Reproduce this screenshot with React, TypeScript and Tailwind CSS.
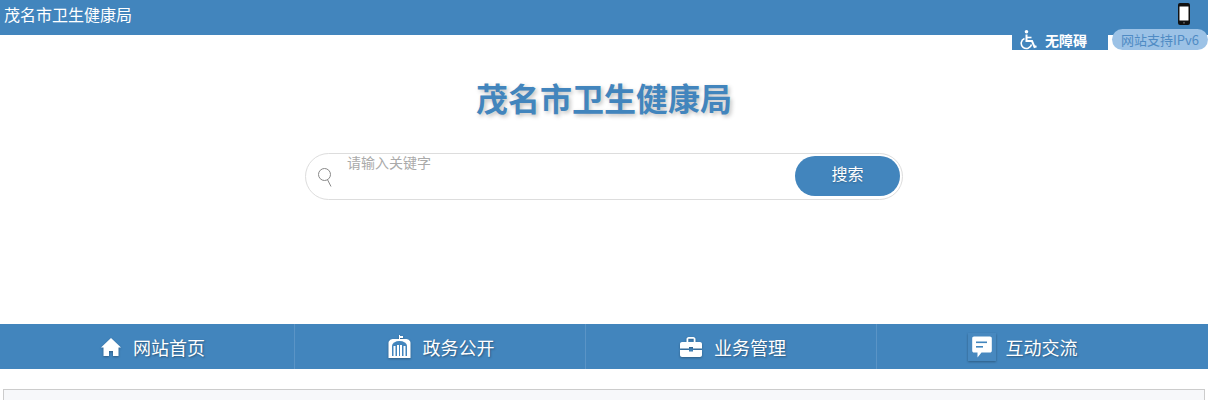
const cjk = "font-['Noto_Sans_CJK_SC','Noto_Sans',sans-serif]";

function PhoneIcon() {
  return (
    <svg width="12" height="22" viewBox="0 0 12 22">
      <rect x="0" y="0" width="12" height="22" rx="2" fill="#111" />
      <rect x="1.5" y="3.5" width="9" height="14" fill="#fff" />
      <circle cx="6" cy="19.8" r="1" fill="#555" />
    </svg>
  );
}

function WheelchairIcon() {
  return (
    <svg width="18" height="20" viewBox="0 0 18 20" fill="none" stroke="#fff">
      <circle cx="7.5" cy="1.8" r="1.8" fill="#fff" stroke="none" />
      <path d="M7.5 4.5V11H13L15.5 17L17.5 16.2" strokeWidth="2" />
      <path d="M7.5 7.5H12.5" strokeWidth="1.6" />
      <path d="M5.5 8.5A5.2 5.2 0 1 0 12.5 14.5" strokeWidth="1.6" />
    </svg>
  );
}

function SearchIcon() {
  return (
    <svg width="14" height="19" viewBox="0 0 14 19" fill="none" stroke="#888" strokeWidth="1">
      <circle cx="6.5" cy="6.5" r="6" />
      <path d="M9.5 11.7L13 18.5" />
    </svg>
  );
}

function HomeIcon() {
  return (
    <svg width="20" height="18" viewBox="0 0 20 18" fill="#fff">
      <path d="M10 0L0 9.5H2.5V18H8V13H12V18H17.5V9.5H20Z" />
    </svg>
  );
}

function GovIcon() {
  return (
    <svg width="23" height="24" viewBox="0 0 23 24" fill="#fff">
      <path d="M11 0H12V1H15V3H12V4H11Z" />
      <path d="M0.5 8C0.5 5.5 3 4 5.5 4H17.5C20 4 22.5 5.5 22.5 8V23H0.5Z" />
      <path d="M4 11A7.5 5 0 0 1 19 11V21H4Z" fill="#4285bd" />
      <path d="M5.5 11h2V21h-2zM9 10h2V21H9zM12 10h2V21h-2zM15.5 11h2V21h-2z" />
    </svg>
  );
}

function CaseIcon() {
  return (
    <svg width="22" height="20" viewBox="0 0 22 20" fill="#fff">
      <path d="M6.5 5V2.2C6.5 1 7.5 0 8.7 0H13.3C14.5 0 15.5 1 15.5 2.2V5H13.7V1.8H8.3V5Z" />
      <path d="M2 5H20C21.1 5 22 5.9 22 7V11.5H13V10H9V11.5H0V7C0 5.9 0.9 5 2 5Z" />
      <path d="M0 13H9V14.5H13V13H22V18C22 19.1 21.1 20 20 20H2C0.9 20 0 19.1 0 18Z" />
    </svg>
  );
}

function ChatIcon() {
  return (
    <div className="flex h-[28px] w-[28px] items-center justify-center bg-[#4788bf]">
      <svg width="20" height="22" viewBox="0 0 20 22">
        <path d="M2 0.5H18C19 0.5 19.8 1.3 19.8 2.3V14.7C19.8 15.7 19 16.5 18 16.5H9.5L5.5 21.5V16.5H2C1 16.5 0.2 15.7 0.2 14.7V2.3C0.2 1.3 1 0.5 2 0.5Z" fill="#fff" />
        <rect x="4" y="5.5" width="11" height="1.6" fill="#4285bd" />
        <rect x="4" y="10" width="7" height="1.6" fill="#4285bd" />
      </svg>
    </div>
  );
}

const navItems = [
  { label: "网站首页", icon: <HomeIcon />, cls: "gap-[12px] pl-[8px]" },
  { label: "政务公开", icon: <GovIcon />, cls: "gap-[12px] pl-[2px]" },
  { label: "业务管理", icon: <CaseIcon />, cls: "gap-[12px] pl-[4px]" },
  { label: "互动交流", icon: <ChatIcon />, cls: "gap-[10px]" },
];

export default function App() {
  return (
    <div className={`relative h-[400px] overflow-hidden bg-white ${cjk}`}>
      {/* Top bar */}
      <div className="flex h-[35px] items-start justify-between bg-[#4285bd] pl-[4px] pr-[18px] pt-[3px] text-white">
        <span className="-mt-[4px] text-[16px] leading-[31px]">茂名市卫生健康局</span>
        <PhoneIcon />
      </div>

      {/* Accessibility + IPv6 */}
      <div className="absolute left-[1012px] top-[30px] flex h-[20px] w-[96px] items-center bg-[#4285bd] pl-[7px] text-white">
        <WheelchairIcon />
        <span className="ml-[8px] text-[14px] font-bold leading-[20px]">无障碍</span>
      </div>
      <div className="absolute left-[1112px] top-[29px] flex h-[21px] w-[96px] items-center justify-center rounded-full bg-[#9cc2e6] text-[13px] text-[#4f8bc4]">
        网站支持IPv6
      </div>

      {/* Title + search */}
      <h1 className="mt-[42px] text-center text-[32px] font-bold leading-[40px] text-[#4285bd] [text-shadow:2px_2px_4px_rgba(0,0,0,0.25)]">
        茂名市卫生健康局
      </h1>
      <div className="ml-[305px] mt-[36px] flex h-[47px] w-[598px] items-center rounded-full border border-[#ddd] pr-[2px]">
        <span className="ml-[12px] mt-[1px]">
          <SearchIcon />
        </span>
        <span className="ml-[15px] -mt-[1px] flex-1 self-start text-[14px] leading-[18px] text-[#aaa]">请输入关键字</span>
        <button className="mb-[1px] h-[40px] w-[105px] rounded-full bg-[#4285bd] pb-[7px] text-[16px] text-white [text-shadow:0_1px_2px_rgba(0,0,0,0.25)]">
          搜索
        </button>
      </div>

      {/* Main nav */}
      <nav className="mt-[124px] flex h-[45px] bg-[#4285bd] pl-[4px] text-white">
        {navItems.map((item, i) => (
          <div
            key={item.label}
            className={`flex w-[291px] items-center justify-center ${item.cls} ${i < 3 ? "border-r border-[#5a94c6]" : ""}`}
          >
            <span className="drop-shadow-[0_1px_1px_rgba(0,0,0,0.3)]">{item.icon}</span>
            <span className="pt-[2px] text-[18px] [text-shadow:1px_1px_2px_rgba(0,0,0,0.35)]">{item.label}</span>
          </div>
        ))}
      </nav>

      {/* Content panel */}
      <div className="mx-[3px] mt-[20px] h-[40px] border border-[#ccc] bg-[#f7f8fa]" />
    </div>
  );
}
